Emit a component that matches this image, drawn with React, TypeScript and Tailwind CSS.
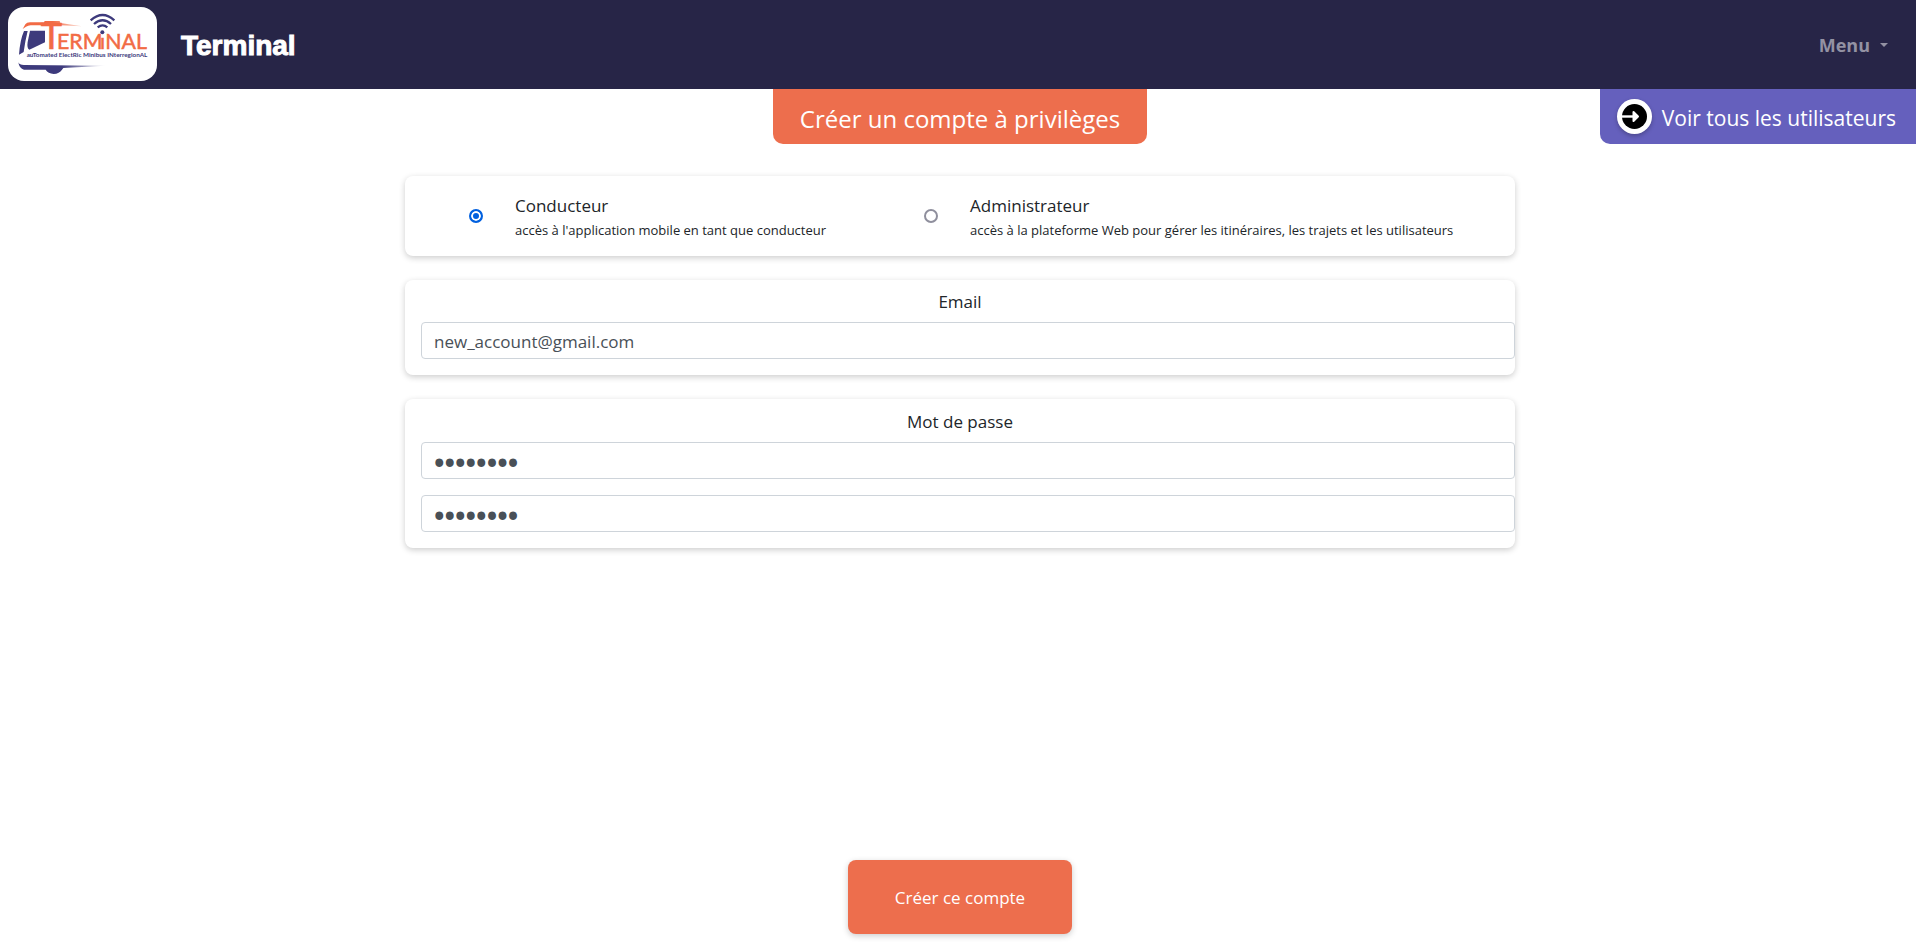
import { useState } from "react";

function Logo() {
  return (
    <svg viewBox="24 21 447 222" className="h-full w-full" role="img" aria-label="Terminal">
      <defs>
        <linearGradient id="roof" x1="0" x2="1">
          <stop offset="0.5" stopColor="#f26b45" />
          <stop offset="1" stopColor="#f26b45" stopOpacity="0.2" />
        </linearGradient>
        <linearGradient id="floor" x1="0" x2="1">
          <stop offset="0.5" stopColor="#3d3a7c" />
          <stop offset="1" stopColor="#3d3a7c" stopOpacity="0.05" />
        </linearGradient>
      </defs>
      <path d="M68 87 L76 73 Q80 67 90 67 L132 67 L134 63 L179 63 L181 69 L247 79 L181 76 L92 76 Q84 77 78 80 Z" fill="url(#roof)" />
      <path d="M72 93 H83 Q76 120 71 156 L57 164 Q60 120 72 93 Z" fill="#3d3a7c" />
      <path d="M90 92 H135 V127 L88 149 Q80 146 83 126 Z" fill="#3d3a7c" />
      <path d="M55 187 Q58 195 72 195 L316 197 L190 204 L186 209 Q178 221 161 222 Q144 220 137 209 L72 209 Q58 207 55 187 Z" fill="url(#floor)" />
      <g fill="none" stroke="#3d3a7c" strokeWidth="7">
        <path d="M272 61 Q308 29 343 61" />
        <path d="M282 72 Q308 49 333 72" />
        <path d="M293 82 Q308 70 322 82" />
      </g>
      <text y="147" fill="#f26b45" fontFamily="Lato, sans-serif" fontSize="64" stroke="#f26b45" strokeWidth="1.5">
        <tspan x="122" fontSize="108" strokeWidth="2">T</tspan>
        <tspan x="171">ERM</tspan>
        <tspan x="300">ı</tspan>
        <tspan x="316">NAL</tspan>
      </text>
      <circle cx="307" cy="97" r="6" fill="#3d3a7c" />
      <text x="80" y="172" fontSize="19" fontWeight="700" fontFamily="Lato, sans-serif" fill="#3d3a7c">
        auTomated ElectRic Minibus INterregionAL
      </text>
    </svg>
  );
}

const roles = [
  {
    id: "driver",
    name: "Conducteur",
    detail: "accès à l'application mobile en tant que conducteur",
  },
  {
    id: "admin",
    name: "Administrateur",
    detail: "accès à la plateforme Web pour gérer les itinéraires, les trajets et les utilisateurs",
  },
];

const card = "rounded-lg bg-white shadow-[0_2px_6px_rgba(0,0,0,0.2)]";
const field =
  "block h-[37px] w-full rounded border border-[#ced4da] bg-white px-3 pt-0.5 text-[#495057] outline-none focus:border-[#80bdff]";
const secret = "text-[28px] [-webkit-text-stroke:2px_#495057]";

export default function App() {
  const [role, setRole] = useState("driver");
  const [email, setEmail] = useState("new_account@gmail.com");
  const [password, setPassword] = useState("password");
  const [confirmation, setConfirmation] = useState("password");

  return (
    <div className="flex min-h-screen flex-col bg-white font-['Open_Sans','Noto_Sans',sans-serif] text-[#212529]">
      <header className="flex h-[89px] shrink-0 items-center justify-between bg-[#272547] pr-7 pl-2">
        <a href="#" className="flex items-center gap-6">
          <span className="mb-0.5 h-[74px] w-[149px] overflow-hidden rounded-2xl bg-white">
            <Logo />
          </span>
          <span className="pt-0.5 font-['Liberation_Sans',Arial,sans-serif] text-[28px] font-bold text-white [-webkit-text-stroke:1px_#fff]">
            Terminal
          </span>
        </a>
        <button type="button" className="flex items-center gap-2.5 text-lg font-bold text-[#9392a3]">
          Menu
          <svg viewBox="0 0 8 4" className="h-1 w-2" fill="currentColor" aria-hidden="true">
            <path d="M0 0H8L4 4Z" />
          </svg>
        </button>
      </header>

      <div className="grid grid-cols-[1fr_auto_1fr] items-start">
        <h1 className="col-start-2 ml-1 flex h-[55px] items-center rounded-b-[10px] bg-[#ed6e4d] px-[27px] pt-2 pb-1 text-2xl text-white">
          Créer un compte à privilèges
        </h1>
        <a
          href="#"
          className="flex h-[55px] items-center gap-2.5 justify-self-end rounded-bl-[10px] bg-[#6560bd] pr-5 pl-[17px] text-[21px] text-white"
        >
          <span className="flex size-[35px] items-center justify-center rounded-full bg-white shadow-[0_2px_4px_rgba(0,0,0,0.25)]">
            <svg viewBox="0 0 25 25" className="size-[25px]" aria-hidden="true">
              <circle cx="12.5" cy="12.5" r="12.5" fill="#000" />
              <path d="M0 12.5H12" stroke="#fff" strokeWidth="2.4" />
              <path d="M11.5 8L16 12.5L11.5 17Z" fill="#fff" stroke="#fff" strokeWidth="2" strokeLinejoin="round" />
            </svg>
          </span>
          <span className="pt-1">Voir tous les utilisateurs</span>
        </a>
      </div>

      <form className="ml-1 flex grow flex-col items-center px-4 pt-8 pb-[17px]" onSubmit={(e) => e.preventDefault()}>
        <div className="flex w-full max-w-[1110px] flex-col gap-6">
          <div className={`${card} flex min-h-20 items-center gap-[98px] pl-16`}>
            {roles.map((r) => (
              <label key={r.id} className="flex items-center gap-8">
                <input
                  type="radio"
                  name="role"
                  checked={role === r.id}
                  onChange={() => setRole(r.id)}
                  className="size-3.5 shrink-0 appearance-none rounded-full border-2 border-[#8f8f9d] bg-white checked:border-[#0060df] checked:bg-[#0060df] checked:shadow-[inset_0_0_0_2px_#fff]"
                />
                <span className="flex flex-col pt-1">
                  <span className="text-[17px] leading-6">{r.name}</span>
                  <span className="text-[13px] leading-6">{r.detail}</span>
                </span>
              </label>
            ))}
          </div>

          <div className={`${card} flex flex-col pt-2.5 pb-4 pl-4`}>
            <label htmlFor="email" className="mb-2 -ml-4 text-center text-[17px] leading-6">
              Email
            </label>
            <input
              id="email"
              type="email"
              value={email}
              onChange={(e) => setEmail(e.target.value)}
              className={`${field} text-[17px]`}
            />
          </div>

          <div className={`${card} flex flex-col pt-[11px] pb-4 pl-4`}>
            <label htmlFor="password" className="mb-2 -ml-4 text-center text-[17px] leading-6">
              Mot de passe
            </label>
            <input
              id="password"
              type="password"
              value={password}
              onChange={(e) => setPassword(e.target.value)}
              className={`${field} ${secret}`}
            />
            <input
              type="password"
              aria-label="Confirmer le mot de passe"
              value={confirmation}
              onChange={(e) => setConfirmation(e.target.value)}
              className={`${field} ${secret} mt-4`}
            />
          </div>
        </div>

        <button
          type="submit"
          className="mt-auto rounded-lg bg-[#ed6e4d] px-[47px] pt-[26px] pb-6 text-[17px] leading-6 text-white shadow-[0_2px_6px_rgba(0,0,0,0.2)]"
        >
          Créer ce compte
        </button>
      </form>
    </div>
  );
}
